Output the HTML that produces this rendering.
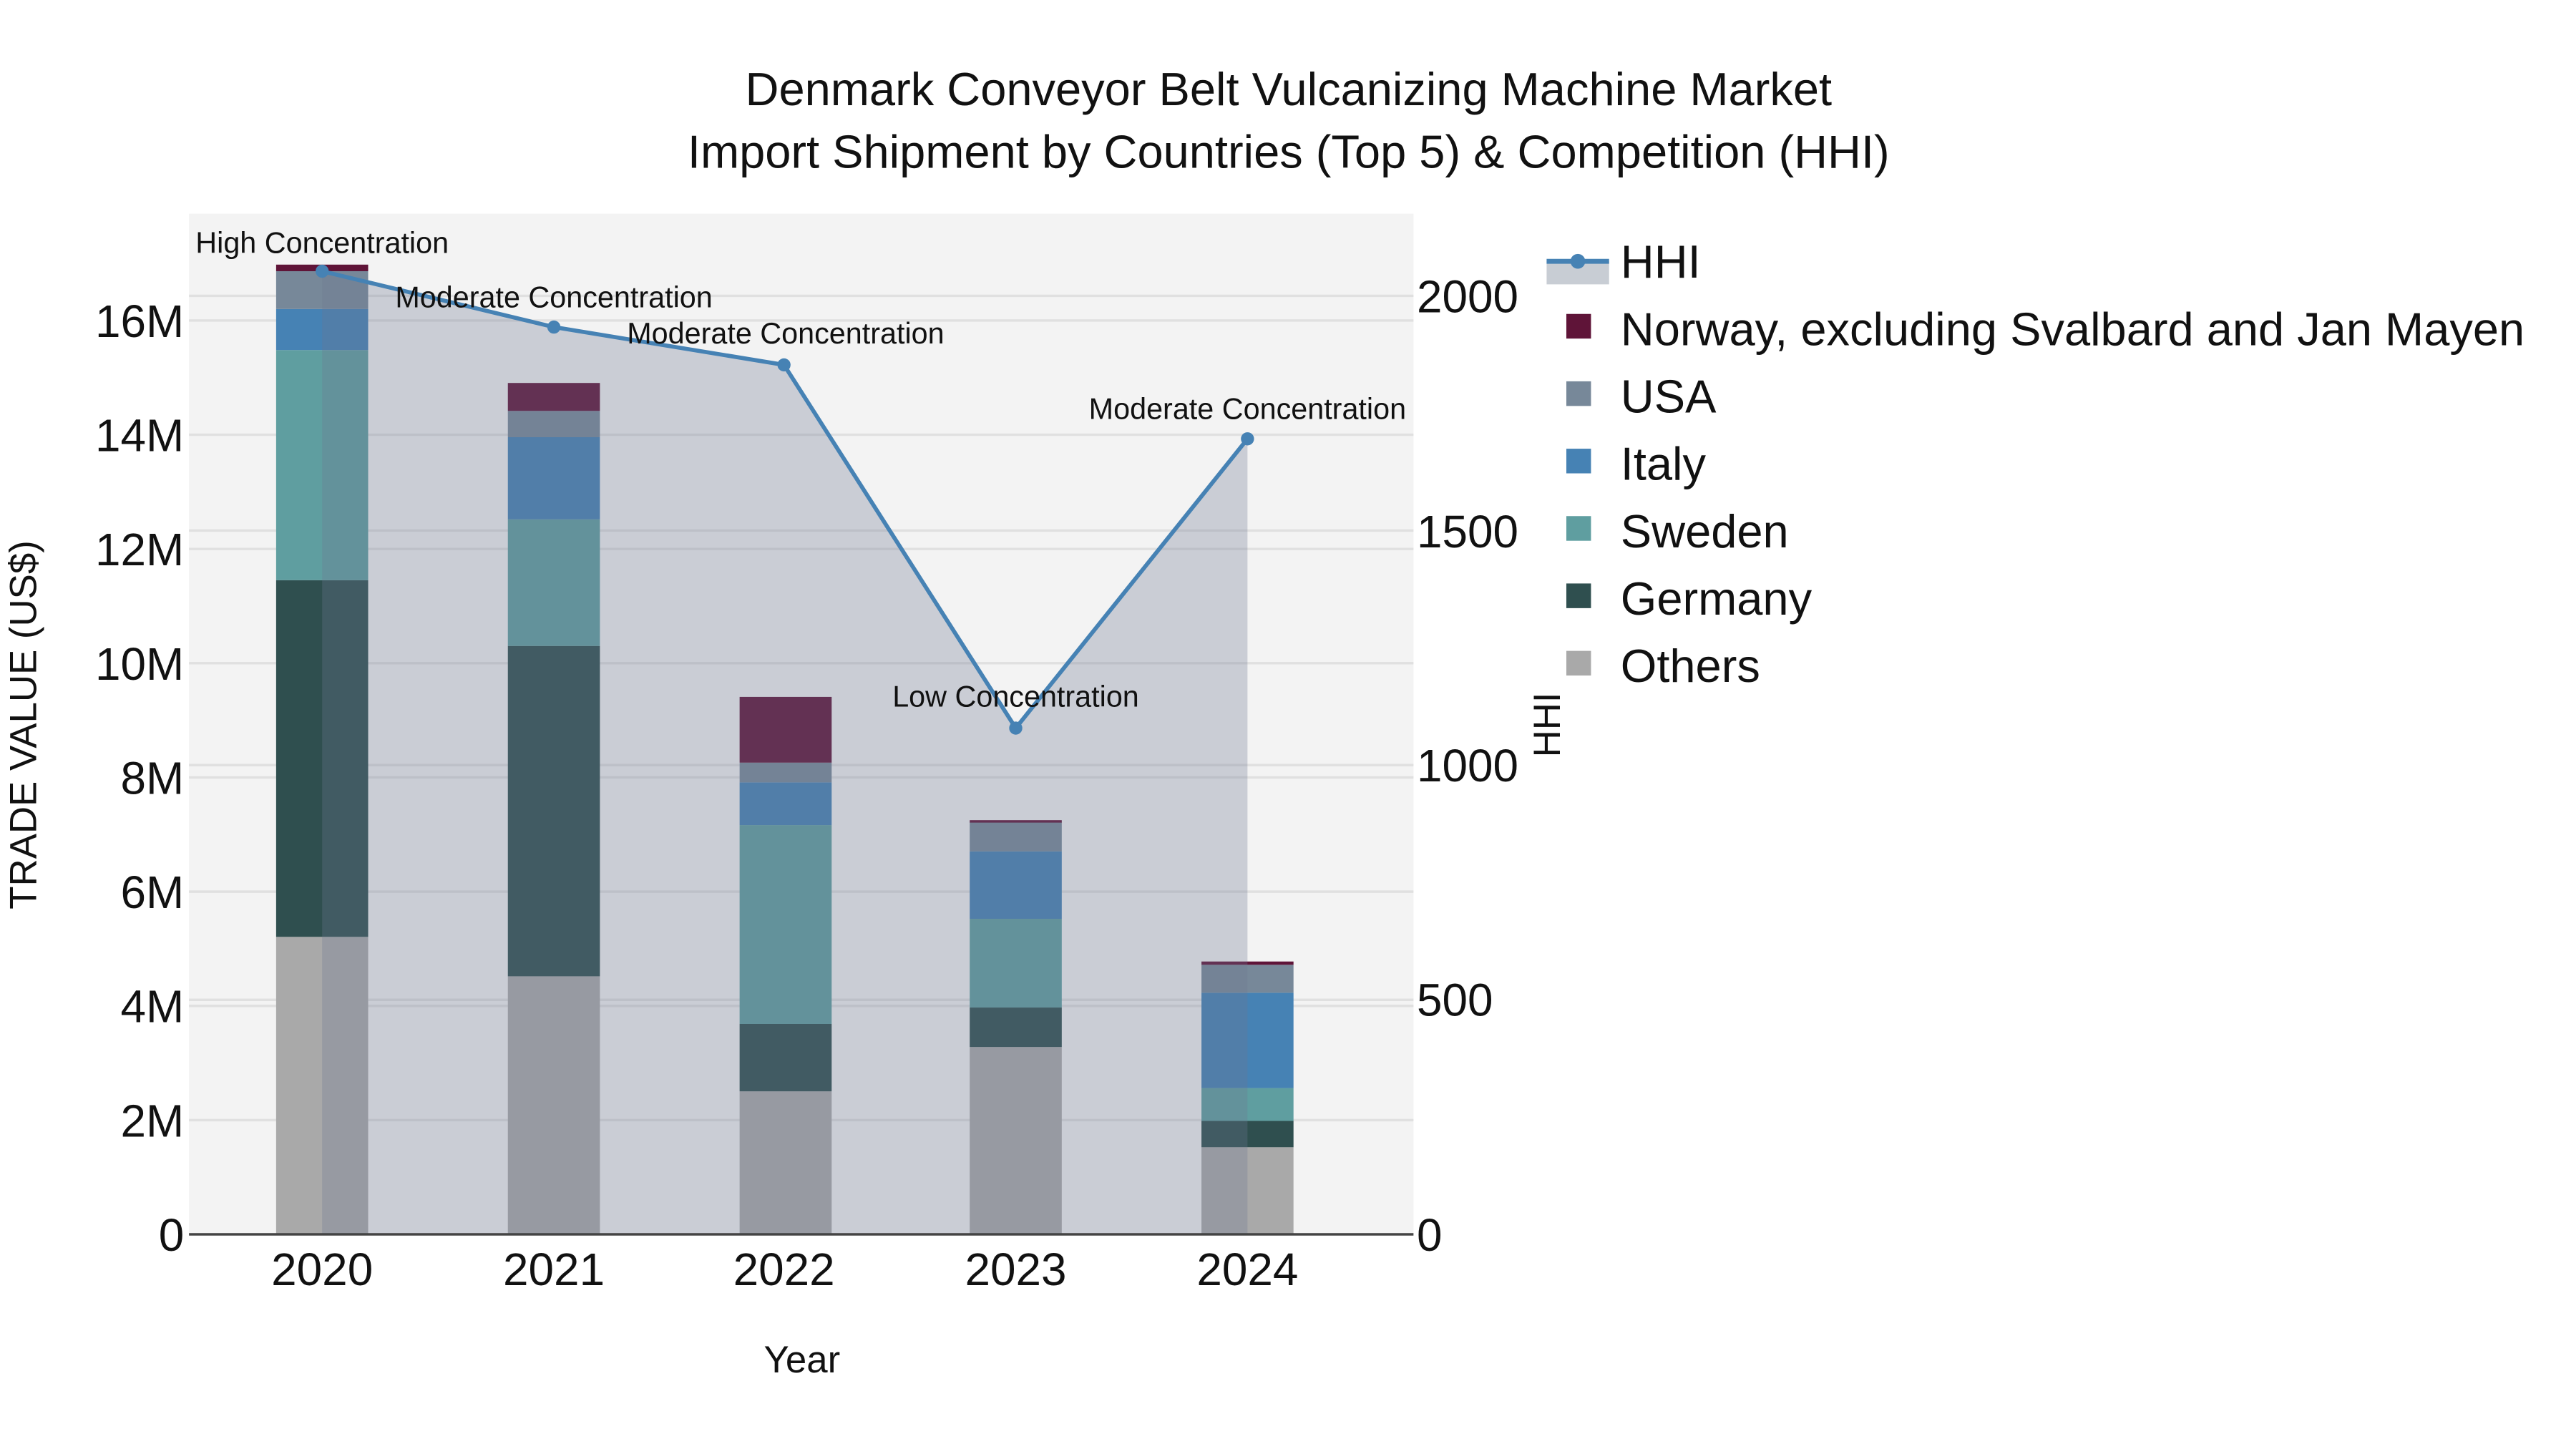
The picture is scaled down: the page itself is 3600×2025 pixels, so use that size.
<!DOCTYPE html>
<html><head><meta charset="utf-8"><style>
html,body{margin:0;padding:0;background:#fff;}
svg{display:block;}
text{font-family:"Liberation Sans",Arial,sans-serif;fill:#111;}
</style></head><body>
<svg width="3600" height="2025" viewBox="0 0 1567.3 881.6" xmlns="http://www.w3.org/2000/svg">
<rect x="0" y="0" width="1567.3" height="881.6" fill="#fff"/>
<text x="784" y="64" font-size="28.3" text-anchor="middle">Denmark Conveyor Belt Vulcanizing Machine Market</text>
<text x="784" y="102" font-size="28.3" text-anchor="middle">Import Shipment by Countries (Top 5) &amp; Competition (HHI)</text>
<rect x="115" y="130" width="745" height="621" fill="#f3f3f3"/>
<g stroke="#e0e0e0" stroke-width="1.5">
<line x1="115" x2="860" y1="681.5" y2="681.5"/><line x1="115" x2="860" y1="612" y2="612"/>
<line x1="115" x2="860" y1="542.5" y2="542.5"/><line x1="115" x2="860" y1="473" y2="473"/>
<line x1="115" x2="860" y1="403.5" y2="403.5"/><line x1="115" x2="860" y1="334" y2="334"/>
<line x1="115" x2="860" y1="264.5" y2="264.5"/><line x1="115" x2="860" y1="195" y2="195"/>
<line x1="115" x2="860" y1="608.3" y2="608.3"/><line x1="115" x2="860" y1="465.5" y2="465.5"/>
<line x1="115" x2="860" y1="322.8" y2="322.8"/><line x1="115" x2="860" y1="180" y2="180"/>
</g>
<g>
<rect x="168" y="570" width="56" height="181" fill="#a9a9a9"/>
<rect x="168" y="353" width="56" height="217" fill="#2f4f4f"/>
<rect x="168" y="213" width="56" height="140" fill="#5f9ea0"/>
<rect x="168" y="188" width="56" height="25" fill="#4682b4"/>
<rect x="168" y="165" width="56" height="23" fill="#778899"/>
<rect x="168" y="161" width="56" height="4" fill="#5f1438"/>

<rect x="309" y="594" width="56" height="157" fill="#a9a9a9"/>
<rect x="309" y="393" width="56" height="201" fill="#2f4f4f"/>
<rect x="309" y="316" width="56" height="77" fill="#5f9ea0"/>
<rect x="309" y="266" width="56" height="50" fill="#4682b4"/>
<rect x="309" y="250" width="56" height="16" fill="#778899"/>
<rect x="309" y="233" width="56" height="17" fill="#5f1438"/>

<rect x="450" y="664" width="56" height="87" fill="#a9a9a9"/>
<rect x="450" y="623" width="56" height="41" fill="#2f4f4f"/>
<rect x="450" y="502" width="56" height="121" fill="#5f9ea0"/>
<rect x="450" y="476" width="56" height="26" fill="#4682b4"/>
<rect x="450" y="464" width="56" height="12" fill="#778899"/>
<rect x="450" y="424" width="56" height="40" fill="#5f1438"/>

<rect x="590" y="637" width="56" height="114" fill="#a9a9a9"/>
<rect x="590" y="613" width="56" height="24" fill="#2f4f4f"/>
<rect x="590" y="559" width="56" height="54" fill="#5f9ea0"/>
<rect x="590" y="518" width="56" height="41" fill="#4682b4"/>
<rect x="590" y="500" width="56" height="18" fill="#778899"/>
<rect x="590" y="499" width="56" height="1.5" fill="#5f1438"/>

<rect x="731" y="698" width="56" height="53" fill="#a9a9a9"/>
<rect x="731" y="682" width="56" height="16" fill="#2f4f4f"/>
<rect x="731" y="662" width="56" height="20" fill="#5f9ea0"/>
<rect x="731" y="604" width="56" height="58" fill="#4682b4"/>
<rect x="731" y="587" width="56" height="17" fill="#778899"/>
<rect x="731" y="585" width="56" height="2" fill="#5f1438"/>
</g>
<polygon points="196,751 196,165 337,199 477,222 618,443 759,267 759,751" fill="rgb(110,120,145)" fill-opacity="0.3"/>
<line x1="115" x2="860" y1="751" y2="751" stroke="#444" stroke-width="1.5"/>
<polyline points="196,165 337,199 477,222 618,443 759,267" fill="none" stroke="#4682b4" stroke-width="2.5"/>
<g fill="#4682b4"><circle cx="196" cy="165" r="4"/><circle cx="337" cy="199" r="4"/><circle cx="477" cy="222" r="4"/><circle cx="618" cy="443" r="4"/><circle cx="759" cy="267" r="4"/></g>
<g font-size="18" text-anchor="middle">
<text x="196" y="154">High Concentration</text>
<text x="337" y="187">Moderate Concentration</text>
<text x="478" y="209">Moderate Concentration</text>
<text x="618" y="430">Low Concentration</text>
<text x="759" y="255">Moderate Concentration</text>
</g>
<g font-size="27.8" text-anchor="end">
<text x="112" y="761">0</text><text x="112" y="691.5">2M</text><text x="112" y="622">4M</text>
<text x="112" y="552.5">6M</text><text x="112" y="483">8M</text><text x="112" y="413.5">10M</text>
<text x="112" y="344">12M</text><text x="112" y="274.5">14M</text><text x="112" y="205">16M</text>
</g>
<g font-size="27.8" text-anchor="start">
<text x="862" y="761">0</text><text x="862" y="618">500</text><text x="862" y="475.5">1000</text>
<text x="862" y="333">1500</text><text x="862" y="190">2000</text>
</g>
<g font-size="27.8" text-anchor="middle">
<text x="196" y="782">2020</text><text x="337" y="782">2021</text><text x="477" y="782">2022</text>
<text x="618" y="782">2023</text><text x="759" y="782">2024</text>
</g>
<text x="488" y="835" font-size="23" text-anchor="middle">Year</text>
<text transform="translate(22,441) rotate(-90)" font-size="23" text-anchor="middle">TRADE VALUE (US$)</text>
<text transform="translate(949,441) rotate(-90)" font-size="23" text-anchor="middle">HHI</text>
<rect x="941" y="159" width="38" height="14" fill="rgb(200,205,212)"/>
<line x1="941" x2="979" y1="159" y2="159" stroke="#4682b4" stroke-width="3"/>
<circle cx="960" cy="159" r="4.5" fill="#4682b4"/>
<g font-size="28.3">
<text x="986" y="169">HHI</text>
<text x="986" y="210">Norway, excluding Svalbard and Jan Mayen</text>
<text x="986" y="251">USA</text>
<text x="986" y="292">Italy</text>
<text x="986" y="333">Sweden</text>
<text x="986" y="374">Germany</text>
<text x="986" y="415">Others</text>
</g>
<rect x="953" y="191" width="15" height="15" fill="#5f1438"/>
<rect x="953" y="232" width="15" height="15" fill="#778899"/>
<rect x="953" y="273" width="15" height="15" fill="#4682b4"/>
<rect x="953" y="314" width="15" height="15" fill="#5f9ea0"/>
<rect x="953" y="355" width="15" height="15" fill="#2f4f4f"/>
<rect x="953" y="396" width="15" height="15" fill="#a9a9a9"/>
</svg>
</body></html>
